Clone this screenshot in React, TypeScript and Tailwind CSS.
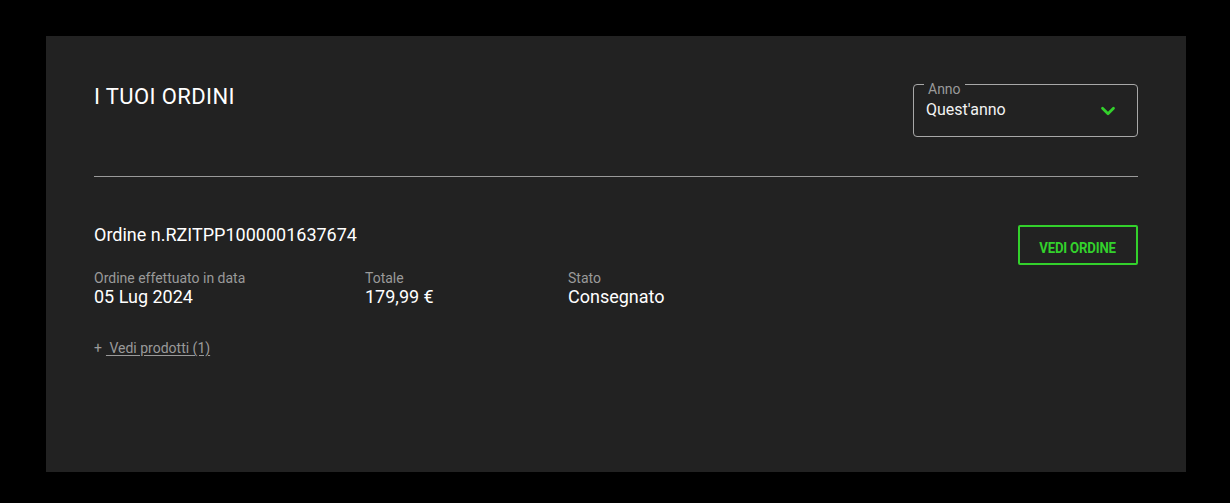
import { ChevronDown } from "lucide-react"

const font = { fontFamily: "Roboto, 'Liberation Sans', sans-serif" }

function YearSelect() {
  return (
    <div className="relative w-[225px] h-[53px] border border-[#a8a8a8] rounded-[4px] pl-[12px] pr-[16px] flex items-center justify-between">
      <span className="absolute -top-[3px] left-[10px] px-[4px] bg-[#222222] text-[14px] leading-[14px] text-[#9a9a9a]">
        Anno
      </span>
      <span className="text-[16px] leading-[20px] text-[#f2f2f2] mt-[-2px]">Quest'anno</span>
      <ChevronDown className="w-[22px] h-[22px] text-[#33d12c] mr-[2px]" strokeWidth={3} />
    </div>
  )
}

function Field({ label, value, width }: { label: string; value: string; width: string }) {
  return (
    <div className={width}>
      <p className="text-[14px] leading-[16px] text-[#9a9a9a]">{label}</p>
      <p className="text-[18px] leading-[22px] font-normal text-white">{value}</p>
    </div>
  )
}

export default function App() {
  return (
    <div className="min-h-[503px] bg-black pt-[36px] pl-[46px]" style={font}>
      <div className="w-[1140px] h-[436px] bg-[#222222] px-[48px] pt-[48px]">
        {/* Header */}
        <div className="flex items-start justify-between">
          <h1 className="text-[22px] leading-[26px] font-normal tracking-[0.4px] text-white">
            I TUOI ORDINI
          </h1>
          <YearSelect />
        </div>

        <div className="h-px bg-[#9a9a9a] mt-[39px]" />

        {/* Order */}
        <div className="mt-[49px] flex items-start justify-between">
          <div>
            <h2 className="text-[18px] leading-[22px] font-normal text-white mt-[-2px]">
              Ordine n.RZITPP1000001637674
            </h2>
            <div className="flex mt-[24px]">
              <Field label="Ordine effettuato in data" value="05 Lug 2024" width="w-[271px]" />
              <Field label="Totale" value="179,99 €" width="w-[203px]" />
              <Field label="Stato" value="Consegnato" width="w-[200px]" />
            </div>
            <button className="mt-[31px] flex items-center text-[14px] leading-[18px] text-[#9a9a9a]">
              <span className="mr-[4px]">+</span>
              <span className="underline underline-offset-2">&nbsp;Vedi prodotti (1)</span>
            </button>
          </div>
          <button className="-mt-px w-[120px] h-[40px] border-2 border-[#33d12c] rounded-[2px] flex items-center justify-center text-[#33d12c]">
            <span className="inline-block text-[15px] leading-[18px] font-bold tracking-[-0.2px] scale-x-[0.88] mt-[6px] whitespace-nowrap">
              VEDI ORDINE
            </span>
          </button>
        </div>
      </div>
    </div>
  )
}
